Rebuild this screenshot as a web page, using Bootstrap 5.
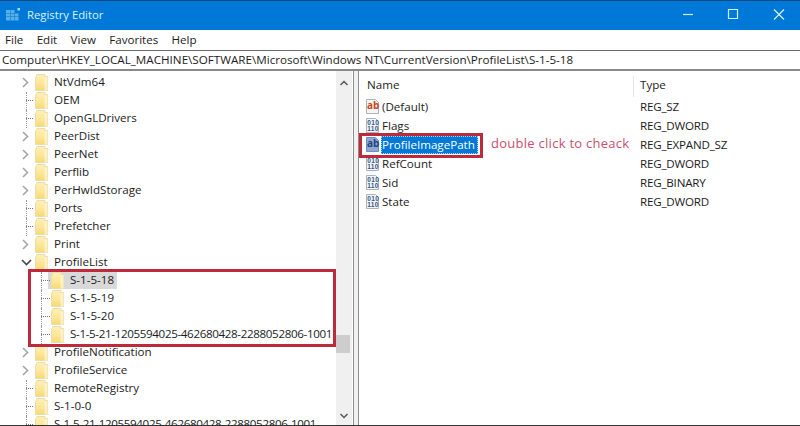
<!DOCTYPE html>
<html lang="en"><head><meta charset="utf-8"><title>Registry Editor</title>
<link href="https://cdn.jsdelivr.net/npm/bootstrap@5.3.0/dist/css/bootstrap.min.css" rel="stylesheet">
<style>
html,body{margin:0;height:426px;overflow:hidden;background:#fff}
body{font-family:"Open Sans","Noto Sans",sans-serif;font-size:11.6px;color:#1c1c1c;line-height:18px;position:relative}
.titlebar{height:30px;background:#0078d7;border-top:1px solid #0a4a80;color:#d8f2ff;font-size:11.3px;padding-bottom:1px}
.titleicon{margin:0 6px 0 6px}
.wincontrols{margin-left:auto}
.wincontrols svg{display:block}
.menubar{height:20px;background:#fff;gap:13.300px;padding:0 5px;font-size:11.6px}
.addressbar{height:21px;border-top:1px solid #6d6d6d;border-bottom:2px solid #8a8a8a;padding-left:2px;font-size:11.65px;line-height:18px;white-space:nowrap;overflow:hidden}
.panes{height:354px}
.bottomline{height:1px;background:#333}
.treepane{width:353px;flex:none;position:relative;overflow:hidden;padding-top:2px}
.splitter{width:6px;flex:none;background:#f1f1f1;border-left:1px solid #8d8d8d;border-right:1px solid #8d8d8d}
.listpane{flex:1;min-width:0;position:relative}
.treerow{height:18px;white-space:nowrap}
.arrowcell{width:35px;flex:none;position:relative;height:18px}
.lvl2 .arrowcell{width:51px}
.chev{position:absolute;left:22px;top:4px}
.chevdown{left:21px;top:6px}
.dots{position:absolute;left:26px;top:9px;width:7px;border-top:1px dotted #777}
.dots::before{content:"";position:absolute;left:0;top:-9px;height:18px;border-left:1px dotted #999}
.lvl2 .dots{left:41px;width:9px}
.fold{flex:none;display:block}
.treelabel{margin-left:6px}
.longid{letter-spacing:-.35px}
.selbg{background:#d9d9d9;margin-left:-3px;padding:0 3px;display:flex;align-items:center;height:18px}
.vscroll{position:absolute;right:1px;top:0;width:16px;height:354px;background:#f0f0f0}
.thumbbar{position:absolute;left:0;top:264px;width:14px;height:18px;background:#cdcdcd}
.upbtn{position:absolute;left:4px;top:9px}
.downbtn{position:absolute;left:4px;top:342px}
.listhead{height:26px;padding-top:5px}
.colname{width:275px;padding-left:8px;border-right:1px solid #e5e5e5;height:21px;flex:none}
.coltype{padding-left:6px}
.listrow{height:19px;white-space:nowrap}
.regicon{flex:none;margin-left:6px;display:block}
.cellname{width:258px;flex:none;margin-left:1px}
.cellname>span{display:inline-block}
.curname{background:#0078d7;color:#fff;padding:0 3px 0 1px;margin-left:-1px;outline:1px dotted #a8d8f5;outline-offset:-1px}
.celltype{letter-spacing:-.2px}
.redbox{position:absolute;border:3px solid #bd2a3c;pointer-events:none}
.boxtree{left:28px;top:269px;width:308px;height:78px}
.boxname{left:359px;top:133px;width:124px;height:25px}
.note{position:absolute;left:491px;top:134px;color:#c9506e;font-size:13px;line-height:18px;letter-spacing:.27px}
</style></head>
<body>
<svg width="0" height="0" class="d-block position-absolute"><defs>
<linearGradient id="fg" x1="0" y1="0" x2="0" y2="1"><stop offset="0" stop-color="#fff0b8"/><stop offset=".6" stop-color="#fce596"/><stop offset="1" stop-color="#f7d873"/></linearGradient>
<g id="fd"><path d="M.5 4L2 .5H10V2.500H12.500V16.500H.5z" fill="url(#fg)" stroke="#eadcab"/><path d="M9.500 3h3v13.500h-3z" fill="#fff6d4" opacity=".7"/></g>
<g id="cr"><path d="M1 1l4.500 4.500L1 10" fill="none" stroke="#a6a6a6" stroke-width="1.600"/></g>
<g id="cd"><path d="M1 1l4.500 4.500L10 1" fill="none" stroke="#444" stroke-width="1.600"/></g>
<g id="pg"><path d="M1.500 1.500h9l3 3v11h-12z" fill="#f8f6f3" stroke="#aab2c0"/></g>
<g id="ab"><use href="#pg"/><text x="2" y="10.500" font-family="Open Sans,sans-serif" font-size="10" font-weight="700" fill="#c2491d">ab</text></g>
<g id="abs"><path d="M1.500 1.500h9l3 3v11h-12z" fill="#8fa9d4" stroke="#6f8fc4"/><text x="2" y="10.500" font-family="Open Sans,sans-serif" font-size="10" font-weight="700" fill="#23437f">ab</text></g>
<g id="bi"><use href="#pg"/><text x="2.200" y="7.500" font-family="Liberation Sans,sans-serif" font-size="6.500" font-weight="700" fill="#2f5690" letter-spacing=".4">010</text><text x="2.200" y="14" font-family="Liberation Sans,sans-serif" font-size="6.500" font-weight="700" fill="#2f5690" letter-spacing=".4">110</text></g>
</defs></svg>

<div class="titlebar d-flex align-items-center">
<svg class="titleicon" width="15" height="15" viewBox="0 0 15 15"><path d="M0 2h4v3H0zM4.500 2h4v3h-4zM0 5.500h4v3H0zM4.500 5.500h4v3h-4zM9 5.500h3.500v3H9zM0 9h4v3.500H0zM4.500 9h4v3.500h-4zM9 9h3.500v3.500H9z" fill="#59b0e6"/><path d="M11.500 0h2.500v2.500h-2.500z" fill="#a8dcf5"/></svg>
<span>Registry Editor</span>
<div class="wincontrols d-flex align-items-center">
<svg width="160" height="29" viewBox="640 1 160 29"><path d="M683 14.500h10" stroke="#d4f3ff" stroke-width="1.200"/><path d="M728.500 9.500h9v9h-9z" fill="none" stroke="#d4f3ff" stroke-width="1.200"/><path d="M774 9.500l10 10M784 9.500l-10 10" stroke="#d4f3ff" stroke-width="1.200"/></svg>
</div></div>

<div class="menubar d-flex align-items-center"><span>File</span><span>Edit</span><span>View</span><span>Favorites</span><span>Help</span></div>
<div class="addressbar">Computer\HKEY_LOCAL_MACHINE\SOFTWARE\Microsoft\Windows NT\CurrentVersion\ProfileList\S-1-5-18</div>

<div class="panes d-flex">
<div class="treepane">
<div class="treerow d-flex align-items-center"><div class="arrowcell"><svg class="chev" width="7" height="11"><use href="#cr"/></svg></div><svg class="fold" width="13" height="17"><use href="#fd"/></svg><span class="treelabel">NtVdm64</span></div>
<div class="treerow d-flex align-items-center"><div class="arrowcell"><i class="dots"></i></div><svg class="fold" width="13" height="17"><use href="#fd"/></svg><span class="treelabel">OEM</span></div>
<div class="treerow d-flex align-items-center"><div class="arrowcell"><i class="dots"></i></div><svg class="fold" width="13" height="17"><use href="#fd"/></svg><span class="treelabel">OpenGLDrivers</span></div>
<div class="treerow d-flex align-items-center"><div class="arrowcell"><svg class="chev" width="7" height="11"><use href="#cr"/></svg></div><svg class="fold" width="13" height="17"><use href="#fd"/></svg><span class="treelabel">PeerDist</span></div>
<div class="treerow d-flex align-items-center"><div class="arrowcell"><svg class="chev" width="7" height="11"><use href="#cr"/></svg></div><svg class="fold" width="13" height="17"><use href="#fd"/></svg><span class="treelabel">PeerNet</span></div>
<div class="treerow d-flex align-items-center"><div class="arrowcell"><svg class="chev" width="7" height="11"><use href="#cr"/></svg></div><svg class="fold" width="13" height="17"><use href="#fd"/></svg><span class="treelabel">Perflib</span></div>
<div class="treerow d-flex align-items-center"><div class="arrowcell"><svg class="chev" width="7" height="11"><use href="#cr"/></svg></div><svg class="fold" width="13" height="17"><use href="#fd"/></svg><span class="treelabel">PerHwIdStorage</span></div>
<div class="treerow d-flex align-items-center"><div class="arrowcell"><i class="dots"></i></div><svg class="fold" width="13" height="17"><use href="#fd"/></svg><span class="treelabel">Ports</span></div>
<div class="treerow d-flex align-items-center"><div class="arrowcell"><i class="dots"></i></div><svg class="fold" width="13" height="17"><use href="#fd"/></svg><span class="treelabel">Prefetcher</span></div>
<div class="treerow d-flex align-items-center"><div class="arrowcell"><svg class="chev" width="7" height="11"><use href="#cr"/></svg></div><svg class="fold" width="13" height="17"><use href="#fd"/></svg><span class="treelabel">Print</span></div>
<div class="treerow d-flex align-items-center"><div class="arrowcell"><svg class="chev chevdown" width="11" height="7"><use href="#cd"/></svg></div><svg class="fold" width="13" height="17"><use href="#fd"/></svg><span class="treelabel">ProfileList</span></div>
<div class="treerow lvl2 d-flex align-items-center"><div class="arrowcell"><i class="dots"></i></div><div class="selbg"><svg class="fold" width="13" height="17"><use href="#fd"/></svg><span class="treelabel">S-1-5-18</span></div></div>
<div class="treerow lvl2 d-flex align-items-center"><div class="arrowcell"><i class="dots"></i></div><svg class="fold" width="13" height="17"><use href="#fd"/></svg><span class="treelabel">S-1-5-19</span></div>
<div class="treerow lvl2 d-flex align-items-center"><div class="arrowcell"><i class="dots"></i></div><svg class="fold" width="13" height="17"><use href="#fd"/></svg><span class="treelabel">S-1-5-20</span></div>
<div class="treerow lvl2 d-flex align-items-center"><div class="arrowcell"><i class="dots"></i></div><svg class="fold" width="13" height="17"><use href="#fd"/></svg><span class="treelabel longid">S-1-5-21-1205594025-462680428-2288052806-1001</span></div>
<div class="treerow d-flex align-items-center"><div class="arrowcell"><svg class="chev" width="7" height="11"><use href="#cr"/></svg></div><svg class="fold" width="13" height="17"><use href="#fd"/></svg><span class="treelabel">ProfileNotification</span></div>
<div class="treerow d-flex align-items-center"><div class="arrowcell"><svg class="chev" width="7" height="11"><use href="#cr"/></svg></div><svg class="fold" width="13" height="17"><use href="#fd"/></svg><span class="treelabel">ProfileService</span></div>
<div class="treerow d-flex align-items-center"><div class="arrowcell"><i class="dots"></i></div><svg class="fold" width="13" height="17"><use href="#fd"/></svg><span class="treelabel">RemoteRegistry</span></div>
<div class="treerow d-flex align-items-center"><div class="arrowcell"><i class="dots"></i></div><svg class="fold" width="13" height="17"><use href="#fd"/></svg><span class="treelabel">S-1-0-0</span></div>
<div class="treerow d-flex align-items-center"><div class="arrowcell"><i class="dots"></i></div><svg class="fold" width="13" height="17"><use href="#fd"/></svg><span class="treelabel longid">S-1-5-21-1205594025-462680428-2288052806-1001</span></div>
<div class="vscroll"><svg class="upbtn" width="8" height="6" viewBox="0 0 8 6"><path d="M.5 5L4 1.500 7.500 5" fill="none" stroke="#555" stroke-width="1.500"/></svg><div class="thumbbar"></div><svg class="downbtn" width="8" height="6" viewBox="0 0 8 6"><path d="M.5 1L4 4.500 7.500 1" fill="none" stroke="#555" stroke-width="1.500"/></svg></div>
</div>
<div class="splitter"></div>
<div class="listpane">
<div class="listhead d-flex"><div class="colname">Name</div><div class="coltype">Type</div></div>
<div class="listrow d-flex align-items-center"><svg class="regicon" width="16" height="17"><use href="#ab"/></svg><div class="cellname"><span>(Default)</span></div><div class="celltype">REG_SZ</div></div>
<div class="listrow d-flex align-items-center"><svg class="regicon" width="16" height="17"><use href="#bi"/></svg><div class="cellname"><span>Flags</span></div><div class="celltype">REG_DWORD</div></div>
<div class="listrow d-flex align-items-center"><svg class="regicon" width="16" height="17"><use href="#abs"/></svg><div class="cellname"><span class="curname">ProfileImagePath</span></div><div class="celltype">REG_EXPAND_SZ</div></div>
<div class="listrow d-flex align-items-center"><svg class="regicon" width="16" height="17"><use href="#bi"/></svg><div class="cellname"><span>RefCount</span></div><div class="celltype">REG_DWORD</div></div>
<div class="listrow d-flex align-items-center"><svg class="regicon" width="16" height="17"><use href="#bi"/></svg><div class="cellname"><span>Sid</span></div><div class="celltype">REG_BINARY</div></div>
<div class="listrow d-flex align-items-center"><svg class="regicon" width="16" height="17"><use href="#bi"/></svg><div class="cellname"><span>State</span></div><div class="celltype">REG_DWORD</div></div>
</div>
</div>
<div class="bottomline"></div>
<div class="redbox boxtree"></div>
<div class="redbox boxname"></div>
<div class="note">double click to cheack</div>
</body></html>
